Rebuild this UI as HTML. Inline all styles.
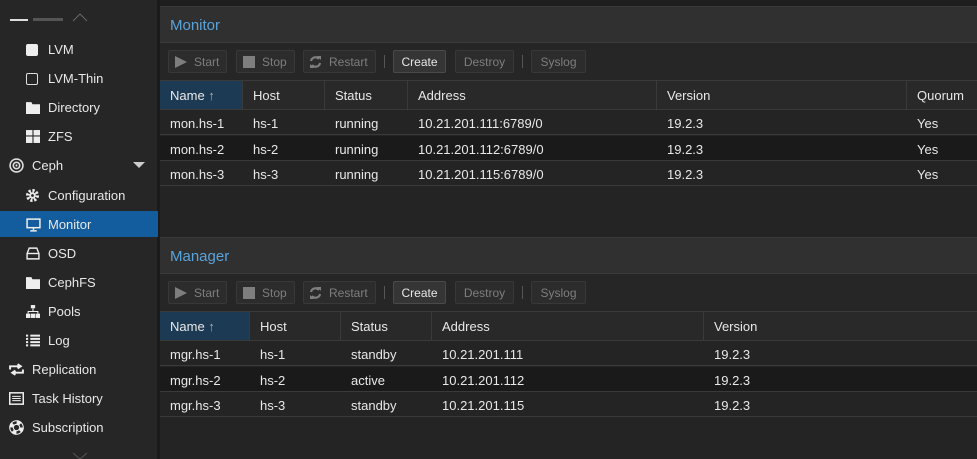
<!DOCTYPE html><html><head><style>
*{box-sizing:border-box;margin:0;padding:0}
body{width:977px;height:459px;background:#242424;font-family:"Liberation Sans",sans-serif;font-size:13px;color:#e6e6e6;position:relative;overflow:hidden}
.side{position:absolute;left:0;top:0;width:158px;height:459px;background:#262626;border-right:1px solid #1a1a1a}
.it{position:absolute;left:0;width:158px;height:26px;line-height:27px;font-size:13px;color:#e8e8e8}
.it .ic{position:absolute;top:7px;width:13px;height:12px}
.sub .ic{left:26px}.sub .tx{position:absolute;left:48px}
.top .ic{left:9px}.top .tx{position:absolute;left:32px}
.sel{background:#135d9e}
.pan{position:absolute;left:160px;right:0;background:#242424}
.title{position:absolute;left:0;right:0;height:37px;background:#303030;border-top:1px solid #3a3a3a;border-bottom:1px solid #3c3c3c;color:#59a3dc;font-size:15px;line-height:38px;padding-left:10px}
.tb{position:absolute;left:0;right:0;height:37px;background:#262626}
.b{position:absolute;top:7px;height:23px;border:1px solid #383838;background:#2c2c2c;border-radius:2px;color:#7e7e7e;font-size:12px;line-height:22px}
.b.on{color:#e8e8e8;background:#353535;border-color:#4a4a4a;text-align:center}
.sep{position:absolute;top:12px;width:1px;height:13px;background:#555}
.hd{position:absolute;left:0;right:0;height:30px;background:#292929;border-top:1px solid #3a3a3a;border-bottom:1px solid #3a3a3a}
.hd div{position:absolute;top:0;height:28px;line-height:29px;padding-left:10px;border-right:1px solid #3a3a3a;color:#e8e8e8}
.hd .s{background:#1d3a55}
.row{position:absolute;left:0;right:0;height:25px;border-bottom:1px solid #3a3a3a;background:#242424}
.row.alt{background:#1a1a1a}
.row div{position:absolute;top:0;line-height:27px;padding-left:10px;color:#e8e8e8}
</style></head><body>
<div style="position:absolute;left:0;top:0;width:977px;height:6px;background:#1e1e1e"></div>
<div class="side">
<div style="position:absolute;left:10px;top:19px;width:18px;height:2px;background:#ddd"></div>
<div style="position:absolute;left:33px;top:18px;width:30px;height:3px;background:#555"></div>
<svg style="position:absolute;left:72px;top:12px" width="16" height="10"><path d="M1 9L8 2L15 9" stroke="#666" fill="none"/></svg>
<div class="it sub" style="top:36px"><div class="ic" style="background:#eee;border-radius:2px;width:12px;height:12px;top:8px"></div><span class="tx">LVM</span></div>
<div class="it sub" style="top:65px"><div class="ic" style="border:1.5px solid #ddd;border-radius:2px;width:12px;height:12px;top:8px"></div><span class="tx">LVM-Thin</span></div>
<div class="it sub" style="top:94px"><svg class="ic" viewBox="0 0 13 12" style="width:14px;height:13px"><path d="M0 1h5l1 2h7v9H0z" fill="#eee"/></svg><span class="tx">Directory</span></div>
<div class="it sub" style="top:123px"><svg class="ic" viewBox="0 0 13 12" style="width:14px;height:13px"><rect x="0" y="0" width="6" height="5" fill="#eee"/><rect x="7" y="0" width="6" height="5" fill="#eee"/><rect x="0" y="6" width="6" height="6" fill="#eee"/><rect x="7" y="6" width="6" height="6" fill="#eee"/></svg><span class="tx">ZFS</span></div>
<div class="it top" style="top:152px"><svg class="ic" viewBox="0 0 14 14" style="width:15px;height:15px;top:6px"><circle cx="7" cy="7" r="6" stroke="#ddd" fill="none" stroke-width="1.5"/><circle cx="7" cy="7" r="3" stroke="#ddd" fill="none" stroke-width="1.5"/><circle cx="7" cy="7" r="1" fill="#ddd"/></svg><span class="tx">Ceph</span><svg style="position:absolute;left:133px;top:10px" width="12" height="7"><path d="M0 0h12L6 6z" fill="#ccc"/></svg></div>
<div class="it sub" style="top:182px"><svg class="ic" viewBox="0 0 12 12" style="width:13px;height:13px"><circle cx="6" cy="6" r="4.5" fill="none" stroke="#eee" stroke-width="3" stroke-dasharray="2 1.5"/><circle cx="6" cy="6" r="3" fill="#eee"/><circle cx="6" cy="6" r="1.3" fill="#262626"/></svg><span class="tx">Configuration</span></div>
<div class="it sub sel" style="top:211px"><svg class="ic" viewBox="0 0 14 13" style="width:15px;height:14px"><rect x="1" y="1" width="12" height="8" fill="none" stroke="#eee" stroke-width="1.4"/><path d="M7 9v2M4 12h6" stroke="#eee" stroke-width="1.4"/></svg><span class="tx">Monitor</span></div>
<div class="it sub" style="top:240px"><svg class="ic" viewBox="0 0 13 12" style="width:14px;height:13px"><path d="M1 6L3 1h7l2 5v5H1z" fill="none" stroke="#eee" stroke-width="1.3"/><path d="M1 6h11" stroke="#eee" stroke-width="1.3"/></svg><span class="tx">OSD</span></div>
<div class="it sub" style="top:269px"><svg class="ic" viewBox="0 0 13 12" style="width:14px;height:13px"><path d="M0 1h5l1 2h7v9H0z" fill="#eee"/></svg><span class="tx">CephFS</span></div>
<div class="it sub" style="top:298px"><svg class="ic" viewBox="0 0 13 12" style="width:14px;height:13px"><rect x="4.5" y="0" width="4" height="3" fill="#eee"/><path d="M6.5 3v3M2 8V6h9v2" stroke="#eee" fill="none"/><rect x="0" y="8" width="4" height="4" fill="#eee"/><rect x="4.5" y="8" width="4" height="4" fill="#eee"/><rect x="9" y="8" width="4" height="4" fill="#eee"/></svg><span class="tx">Pools</span></div>
<div class="it sub" style="top:327px"><svg class="ic" viewBox="0 0 13 12" style="width:14px;height:13px"><path d="M0 1.5h2M4 1.5h9M0 4.5h2M4 4.5h9M0 7.5h2M4 7.5h9M0 10.5h2M4 10.5h9" stroke="#eee" stroke-width="1.8"/></svg><span class="tx">Log</span></div>
<div class="it top" style="top:356px"><svg class="ic" viewBox="0 0 14 12" style="width:15px;height:13px"><path d="M1 6V3h9M8 1l3 2-3 2M13 6v3H4M6 7L3 9l3 2" stroke="#eee" fill="none" stroke-width="1.8"/></svg><span class="tx">Replication</span></div>
<div class="it top" style="top:385px"><svg class="ic" viewBox="0 0 14 12" style="width:15px;height:13px"><rect x="0.7" y="0.7" width="12.6" height="10.6" fill="none" stroke="#eee" stroke-width="1.4"/><path d="M3 4h8M3 6h8M3 8h8" stroke="#eee"/></svg><span class="tx">Task History</span></div>
<div class="it top" style="top:414px"><svg class="ic" viewBox="0 0 14 14" style="width:15px;height:15px;top:6px"><circle cx="7" cy="7" r="5" fill="none" stroke="#eee" stroke-width="3.5" stroke-dasharray="4 3.85"/><circle cx="7" cy="7" r="6.3" fill="none" stroke="#eee" stroke-width="1"/><circle cx="7" cy="7" r="3" fill="none" stroke="#eee" stroke-width="1"/></svg><span class="tx">Subscription</span></div>
<svg style="position:absolute;left:72px;top:452px" width="16" height="7"><path d="M1 1L8 7L15 1" stroke="#555" fill="none"/></svg>
</div>
<div style="position:absolute;left:158px;top:0;width:2px;height:459px;background:#1b1b1b"></div>

<!-- Monitor -->
<div class="pan" style="top:6px;height:230px">
<div class="title" style="top:0">Monitor</div>
<div class="tb" style="top:37px">
<div class="b" style="left:8px;width:59px"><svg style="position:absolute;left:6px;top:5px" width="12" height="12"><path d="M0 0L12 6L0 12z" fill="#7e7e7e"/></svg><span style="position:absolute;left:25px">Start</span></div>
<div class="b" style="left:76px;width:59px"><div style="position:absolute;left:6px;top:5px;width:12px;height:12px;background:#7e7e7e"></div><span style="position:absolute;left:25px">Stop</span></div>
<div class="b" style="left:143px;width:73px"><svg style="position:absolute;left:5px;top:5px" width="13" height="12" viewBox="0 0 13 12"><path d="M2 5A4.5 4.5 0 0 1 10 3M11 7A4.5 4.5 0 0 1 3 9" stroke="#7e7e7e" stroke-width="2.2" fill="none"/><path d="M8 0h4v4zM5 12H1V8z" fill="#7e7e7e"/></svg><span style="position:absolute;left:25px">Restart</span></div>
<div class="sep" style="left:224px"></div>
<div class="b on" style="left:233px;width:53px">Create</div>
<div class="b on" style="left:295px;width:59px;color:#7e7e7e;background:#2c2c2c;border-color:#383838">Destroy</div>
<div class="sep" style="left:362px"></div>
<div class="b on" style="left:371px;width:55px;color:#7e7e7e;background:#2c2c2c;border-color:#383838">Syslog</div>
</div>
<div class="hd" style="top:74px">
<div class="s" style="left:0;width:83px">Name <span style="color:#aaa">↑</span></div><div style="left:83px;width:82px">Host</div><div style="left:165px;width:83px">Status</div><div style="left:248px;width:249px">Address</div><div style="left:497px;width:250px">Version</div><div style="left:747px;width:70px;border:none">Quorum</div>
</div>
<div class="row" style="top:104px"><div style="left:0">mon.hs-1</div><div style="left:83px">hs-1</div><div style="left:165px">running</div><div style="left:248px">10.21.201.111:6789/0</div><div style="left:497px">19.2.3</div><div style="left:747px">Yes</div></div>
<div class="row alt" style="top:130px"><div style="left:0">mon.hs-2</div><div style="left:83px">hs-2</div><div style="left:165px">running</div><div style="left:248px">10.21.201.112:6789/0</div><div style="left:497px">19.2.3</div><div style="left:747px">Yes</div></div>
<div class="row" style="top:155px"><div style="left:0">mon.hs-3</div><div style="left:83px">hs-3</div><div style="left:165px">running</div><div style="left:248px">10.21.201.115:6789/0</div><div style="left:497px">19.2.3</div><div style="left:747px">Yes</div></div>
</div>

<!-- Manager -->
<div class="pan" style="top:237px;height:222px">
<div class="title" style="top:0">Manager</div>
<div class="tb" style="top:37px">
<div class="b" style="left:8px;width:59px"><svg style="position:absolute;left:6px;top:5px" width="12" height="12"><path d="M0 0L12 6L0 12z" fill="#7e7e7e"/></svg><span style="position:absolute;left:25px">Start</span></div>
<div class="b" style="left:76px;width:59px"><div style="position:absolute;left:6px;top:5px;width:12px;height:12px;background:#7e7e7e"></div><span style="position:absolute;left:25px">Stop</span></div>
<div class="b" style="left:143px;width:73px"><svg style="position:absolute;left:5px;top:5px" width="13" height="12" viewBox="0 0 13 12"><path d="M2 5A4.5 4.5 0 0 1 10 3M11 7A4.5 4.5 0 0 1 3 9" stroke="#7e7e7e" stroke-width="2.2" fill="none"/><path d="M8 0h4v4zM5 12H1V8z" fill="#7e7e7e"/></svg><span style="position:absolute;left:25px">Restart</span></div>
<div class="sep" style="left:224px"></div>
<div class="b on" style="left:233px;width:53px">Create</div>
<div class="b on" style="left:295px;width:59px;color:#7e7e7e;background:#2c2c2c;border-color:#383838">Destroy</div>
<div class="sep" style="left:362px"></div>
<div class="b on" style="left:371px;width:55px;color:#7e7e7e;background:#2c2c2c;border-color:#383838">Syslog</div>
</div>
<div class="hd" style="top:74px">
<div class="s" style="left:0;width:90px">Name <span style="color:#aaa">↑</span></div><div style="left:90px;width:91px">Host</div><div style="left:181px;width:91px">Status</div><div style="left:272px;width:272px">Address</div><div style="left:544px;width:273px;border:none">Version</div>
</div>
<div class="row" style="top:104px"><div style="left:0">mgr.hs-1</div><div style="left:90px">hs-1</div><div style="left:181px">standby</div><div style="left:272px">10.21.201.111</div><div style="left:544px">19.2.3</div></div>
<div class="row alt" style="top:130px"><div style="left:0">mgr.hs-2</div><div style="left:90px">hs-2</div><div style="left:181px">active</div><div style="left:272px">10.21.201.112</div><div style="left:544px">19.2.3</div></div>
<div class="row" style="top:155px"><div style="left:0">mgr.hs-3</div><div style="left:90px">hs-3</div><div style="left:181px">standby</div><div style="left:272px">10.21.201.115</div><div style="left:544px">19.2.3</div></div>
</div>
</body></html>
